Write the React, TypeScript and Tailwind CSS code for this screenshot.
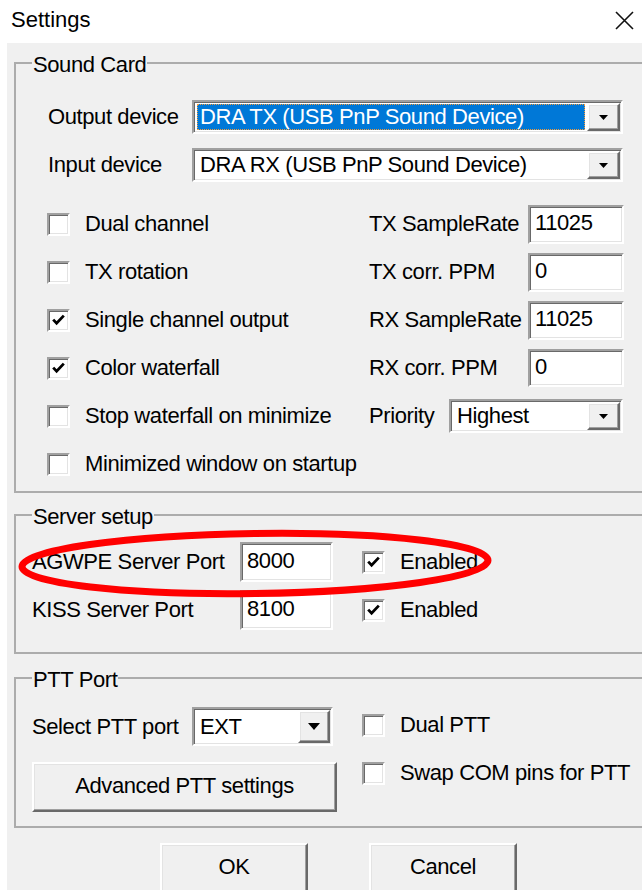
import type { ReactNode } from 'react';

// classic 3D borders
const sunken =
  'bg-white border-2 border-t-[#a0a0a0] border-l-[#a0a0a0] border-b-white border-r-white shadow-[inset_1px_1px_0_#696969,inset_-1px_-1px_0_#e3e3e3]';
const raised =
  'bg-[#f0f0f0] border-2 border-t-white border-l-white border-b-[#696969] border-r-[#696969] shadow-[inset_-1px_-1px_0_#a0a0a0,inset_1px_1px_0_#e3e3e3]';

const Arrow = ({ w = 9, h = 5 }: { w?: number; h?: number }) => (
  <svg width={w} height={h} viewBox={`0 0 ${w} ${h}`}>
    <path d={`M0 0H${w}L${w / 2} ${h}Z`} fill="#000" />
  </svg>
);

const Check = ({ checked }: { checked?: boolean }) => (
  <span className={`flex h-[23px] w-[23px] shrink-0 items-center justify-center ${sunken}`}>
    {checked && (
      <svg width="13" height="12" viewBox="0 0 13 12">
        <path d="M1.2 5.6L4.6 9.2L11.8 1.6" fill="none" stroke="#000" strokeWidth="2.8" />
      </svg>
    )}
  </span>
);

const CheckRow = ({ label, checked }: { label: string; checked?: boolean }) => (
  <div className="flex h-[48px] items-center gap-[15px]">
    <Check checked={checked} />
    <span>{label}</span>
  </div>
);

const Edit = ({ value, className = '' }: { value: string; className?: string }) => (
  <div className={`flex items-center pb-[2px] pl-[5px] ${sunken} ${className}`}>{value}</div>
);

interface ComboProps {
  value: string;
  className?: string;
  selected?: boolean;
  btn?: string;
  arrow?: [number, number];
}

const Combo = ({ value, className = '', selected, btn = 'w-[33px]', arrow = [9, 5] }: ComboProps) => (
  <div className={`flex p-[1px] ${sunken} ${className}`}>
    <div className="flex min-w-0 flex-1 items-stretch py-[1px] pl-[2px] pr-[2px]">
      {selected ? (
        <div className="flex flex-1 items-center border border-dotted border-[#f39b3c] bg-[#0078d7] pl-[2px] text-white">
          {value}
        </div>
      ) : (
        <div className="flex flex-1 items-center pl-[3px]">{value}</div>
      )}
    </div>
    <div className={`flex shrink-0 items-center justify-center ${raised} ${btn}`}>
      <Arrow w={arrow[0]} h={arrow[1]} />
    </div>
  </div>
);

const Group = ({ title, className = '', children }: { title: string; className?: string; children: ReactNode }) => (
  <fieldset className={`ml-[7px] w-[650px] border-2 border-[#acacac] px-0 ${className}`}>
    <legend className="ml-[16px] px-[1px] pt-[4px] leading-[24px]">{title}</legend>
    {children}
  </fieldset>
);

const PushButton = ({ label, className = '' }: { label: string; className?: string }) => (
  <div className={`flex items-center justify-center pb-[2px] ${raised} ${className}`}>{label}</div>
);

export default function App() {
  return (
    <div className="relative h-[890px] w-[642px] overflow-hidden bg-white font-['Liberation_Sans',Arial,sans-serif] text-[22px] leading-none text-black">
      {/* title bar */}
      <div className="flex h-[43px] items-center justify-between pl-[11px] pr-[8px]">
        <span className="pb-[4px]">Settings</span>
        <svg width="19" height="19" viewBox="0 0 19 19" className="mb-[3px]">
          <path d="M1 1L18 18M18 1L1 18" stroke="#111" strokeWidth="1.6" />
        </svg>
      </div>

      <div className="ml-[7px] h-[847px] w-[660px] bg-[#f0f0f0] pt-[6px] tracking-[-0.4px]">
        <Group title="Sound Card" className="pb-[3px]">
          <div className="pl-[31px] pt-[16px]">
            <div className="flex h-[48px] items-center">
              <span className="w-[145px] pl-[1px]">Output device</span>
              <Combo value="DRA TX (USB PnP Sound Device)" selected className="h-[34px] w-[431px]" />
            </div>
            <div className="flex h-[48px] items-center">
              <span className="w-[145px] pl-[1px]">Input device</span>
              <Combo value="DRA RX (USB PnP Sound Device)" className="h-[34px] w-[431px]" />
            </div>
            <div className="mt-[11px] flex">
              <div className="w-[322px]">
                <CheckRow label="Dual channel" />
                <CheckRow label="TX rotation" />
                <CheckRow label="Single channel output" checked />
                <CheckRow label="Color waterfall" checked />
                <CheckRow label="Stop waterfall on minimize" />
                <CheckRow label="Minimized window on startup" />
              </div>
              <div className="w-[255px]">
                <div className="flex h-[48px] items-center justify-between">
                  <span>TX SampleRate</span>
                  <Edit value="11025" className="h-[39px] w-[96px]" />
                </div>
                <div className="flex h-[48px] items-center justify-between">
                  <span>TX corr. PPM</span>
                  <Edit value="0" className="h-[39px] w-[96px]" />
                </div>
                <div className="flex h-[48px] items-center justify-between">
                  <span>RX SampleRate</span>
                  <Edit value="11025" className="h-[39px] w-[96px]" />
                </div>
                <div className="flex h-[48px] items-center justify-between">
                  <span>RX corr. PPM</span>
                  <Edit value="0" className="h-[38px] w-[96px]" />
                </div>
                <div className="flex h-[48px] items-center justify-between pr-[1px]">
                  <span>Priority</span>
                  <Combo value="Highest" className="h-[34px] w-[174px]" />
                </div>
              </div>
            </div>
          </div>
        </Group>

        <Group title="Server setup" className="mt-[8px] pb-[18px]">
          <div className="pl-[16px] pt-[9px]">
            {[
              ['AGWPE Server Port', '8000'],
              ['KISS Server Port', '8100'],
            ].map(([label, port]) => (
              <div key={label} className="flex h-[48px] items-center">
                <span className="w-[208px]">{label}</span>
                <Edit value={port} className="h-[40px] w-[93px]" />
                <div className="ml-[29px] flex items-center gap-[15px]">
                  <Check checked />
                  <span>Enabled</span>
                </div>
              </div>
            ))}
          </div>
        </Group>

        <Group title="PTT Port" className="mt-[10px] pb-[14px]">
          <div className="flex pl-[16px]">
            <div className="w-[305px] pt-[15px]">
              <div className="flex items-center">
                <span className="w-[160px]">Select PTT port</span>
                <Combo value="EXT" className="h-[39px] w-[141px]" btn="w-[32px]" arrow={[12, 7]} />
              </div>
              <PushButton label="Advanced PTT settings" className="mt-[16px] h-[50px] w-[305px]" />
            </div>
            <div className="ml-[25px] pt-[9px]">
              <CheckRow label="Dual PTT" />
              <CheckRow label="Swap COM pins for PTT" />
            </div>
          </div>
        </Group>

        <div className="mt-[15px] flex gap-[61px] pl-[153px]">
          <PushButton label="OK" className="h-[50px] w-[148px]" />
          <PushButton label="Cancel" className="h-[50px] w-[148px]" />
        </div>
      </div>

      {/* red marker round the AGWPE row */}
      <svg
        className="pointer-events-none absolute left-[15px] top-[526px]"
        width="480"
        height="75"
        viewBox="0 0 480 75"
      >
        <ellipse
          cx="240"
          cy="37.5"
          rx="233"
          ry="30"
          fill="none"
          stroke="#ff0000"
          strokeWidth="7"
          transform="rotate(-0.8 240 37.5)"
        />
      </svg>
    </div>
  );
}
